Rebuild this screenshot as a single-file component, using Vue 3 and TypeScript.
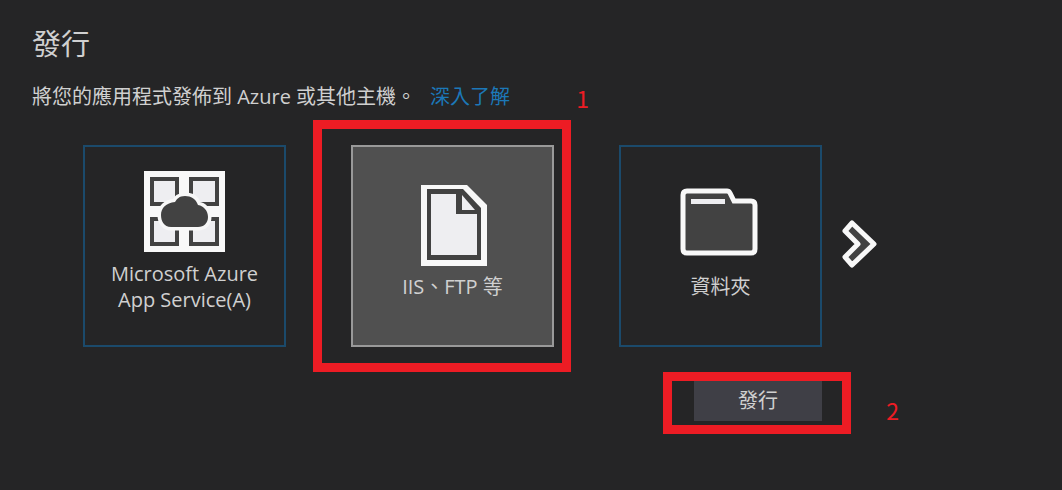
<script setup lang="ts">
import { ref } from 'vue'

type TargetId = 'azure' | 'iis' | 'folder'

interface PublishTarget {
  id: TargetId
  lines: string[]
}

const targets: PublishTarget[] = [
  { id: 'azure', lines: ['Microsoft Azure', 'App Service(A)'] },
  { id: 'iis', lines: ['IIS、FTP 等'] },
  { id: 'folder', lines: ['資料夾'] },
]

const selected = ref<TargetId>('iis')
</script>

<template>
  <main class="publish" lang="zh-Hant">
    <h1 class="title">發行</h1>
    <p class="intro">
      將您的應用程式發佈到 Azure 或其他主機。<a class="learn" href="#learn">深入了解</a>
    </p>

    <div class="targets">
      <div v-for="target in targets" :key="target.id" class="slot">
        <button
          type="button"
          class="card"
          :class="{ selected: selected === target.id }"
          :aria-pressed="selected === target.id"
          @click="selected = target.id"
        >
          <svg v-if="target.id === 'azure'" width="82" height="82" viewBox="0 0 82 82" aria-hidden="true">
            <rect width="81" height="81" fill="#f8f8f8" />
            <g fill="#eeeef1" stroke="#424242" stroke-width="4">
              <rect x="8" y="8" width="25" height="25" />
              <rect x="47" y="8" width="26" height="25" />
              <rect x="8" y="48" width="25" height="25" />
              <rect x="47" y="48" width="26" height="25" />
            </g>
            <path
              d="M27 56C20 56 17 50 17 44C17 37 22 32 31 31C33 28 35 25 41 25C47 25 52 28 54 34C60 35 64 40 64 46C64 52 60 56 54 56Z"
              fill="#424242"
              stroke="#f8f8f8"
              stroke-width="7"
              stroke-linejoin="round"
              paint-order="stroke"
            />
          </svg>
          <svg v-else-if="target.id === 'iis'" width="68" height="81" viewBox="-2 0 68 81" aria-hidden="true">
            <path d="M0 0H46L66 20V81H0Z" fill="#f8f8f8" />
            <path d="M6 4H42L60 23V75H6Z" fill="#424242" />
            <path d="M10 9H35V29H56V70H10Z" fill="#eeeef1" />
            <path d="M41 10V25H54Z" fill="#eeeef1" />
          </svg>
          <svg v-else width="82" height="81" viewBox="-1 -4 82 81" aria-hidden="true">
            <path
              d="M6 2H46Q48 2 49 4L53 12H70Q74 12 74 16V60Q74 64 70 64H6Q2 64 2 60V6Q2 2 6 2Z"
              fill="#424242"
              stroke="#f8f8f8"
              stroke-width="5"
            />
            <path d="M10 10H44V15H10Z" fill="#eeeef1" />
          </svg>
          <span class="label">
            <span v-for="line in target.lines" :key="line" class="line">{{ line }}</span>
          </span>
        </button>
        <template v-if="target.id === 'iis'">
          <span class="frame frame-card" aria-hidden="true"></span>
          <span class="step step-card">1</span>
        </template>
      </div>

      <button type="button" class="next" aria-label="下一個">
        <svg width="36" height="48" viewBox="0 0 36 48" aria-hidden="true">
          <path
            d="M11 3L33 24L11 45L4 37L17 24L4 11Z"
            fill="#424242"
            stroke="#f8f8f8"
            stroke-width="5"
            stroke-linejoin="round"
          />
        </svg>
      </button>

      <div class="slot action">
        <button type="button" class="submit">發行</button>
        <span class="frame frame-action" aria-hidden="true"></span>
        <span class="step step-action">2</span>
      </div>
    </div>
  </main>
</template>

<style>
body {
  margin: 0;
  background: #252526;
}
</style>

<style scoped>
.publish {
  box-sizing: border-box;
  min-height: 100vh;
  padding: 24px 32px;
  background: #252526;
  color: #d0d0d0;
  font-family: "Open Sans", "Noto Sans CJK TC", sans-serif;
  font-size: 20px;
  line-height: 26px;
}

.title {
  margin: 0;
  font-size: 29px;
  font-weight: 400;
  line-height: 40px;
}

.intro {
  margin: 20px 0 0;
}

.learn {
  margin-left: 14px;
  color: #1c78b8;
  text-decoration: none;
}

.targets {
  display: grid;
  grid-template-columns: repeat(3, 203px) auto;
  justify-content: start;
  column-gap: 65px;
  row-gap: 34px;
  margin: 35px 0 0 51px;
}

.slot {
  position: relative;
}

.card {
  display: flex;
  flex-direction: column;
  align-items: center;
  justify-content: center;
  gap: 8px;
  box-sizing: border-box;
  width: 100%;
  height: 202px;
  padding: 0 0 8px;
  border: 2px solid #1b4a6b;
  background: transparent;
  color: inherit;
  font: inherit;
  cursor: pointer;
}

.card.selected {
  border-color: #999999;
  background: #505050;
}

.card svg,
.next svg {
  display: block;
  flex: none;
}

.line {
  display: block;
  white-space: nowrap;
}

.next {
  align-self: center;
  margin-left: -46px;
  padding: 0 0 4px;
  border: 0;
  background: transparent;
  cursor: pointer;
}

.action {
  grid-column: 3;
  justify-self: end;
}

.submit {
  display: block;
  width: 128px;
  height: 40px;
  padding: 0;
  border: 0;
  background: #3f3f46;
  color: inherit;
  font: inherit;
  cursor: pointer;
}

.frame {
  position: absolute;
  border: 9px solid #ed1c24;
  pointer-events: none;
}

.frame-card {
  inset: -25px -17px -25px -38px;
}

.frame-action {
  inset: -9px -29px -13px -31px;
}

.step {
  position: absolute;
  color: #ed1c24;
  font-family: "Noto Sans CJK TC", sans-serif;
  font-size: 23px;
  line-height: 26px;
}

.step-card {
  top: -60px;
  right: -35px;
}

.step-action {
  top: 16px;
  right: -77px;
}
</style>
